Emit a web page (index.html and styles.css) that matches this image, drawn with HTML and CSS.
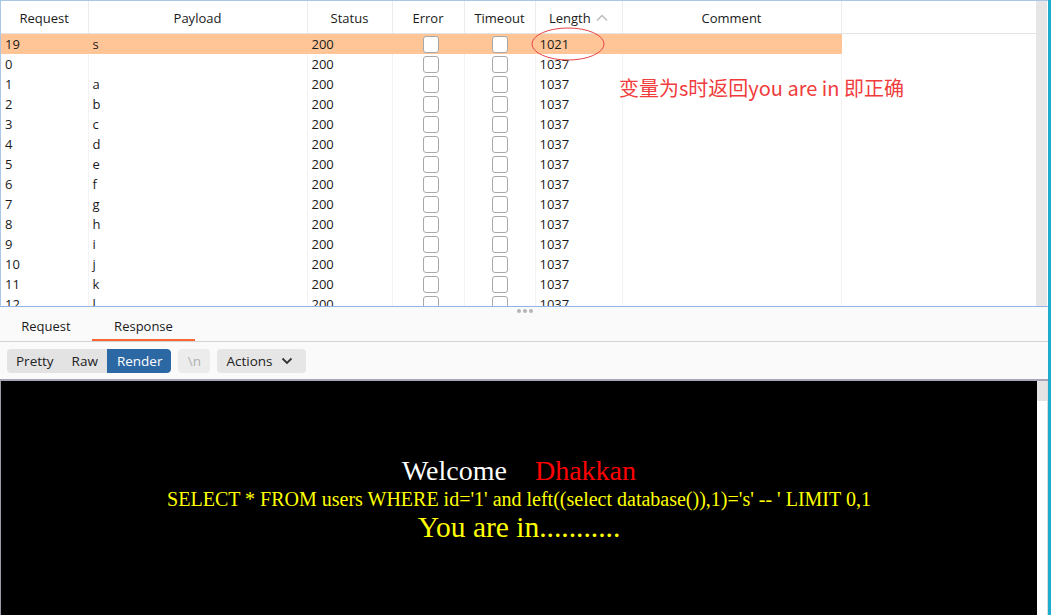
FILE: index.html
```html
<!DOCTYPE html>
<html>
<head>
<meta charset="utf-8">
<link rel="stylesheet" href="styles.css">
</head>
<body>
<div class="app">
  <div class="results">
    <div class="grid-area">
      <table class="grid">
        <colgroup>
          <col class="c-req"><col class="c-pay"><col class="c-st"><col class="c-err"><col class="c-to"><col class="c-len"><col class="c-com"><col class="c-fill">
        </colgroup>
        <thead>
          <tr>
            <th>Request</th><th>Payload</th><th>Status</th><th>Error</th><th>Timeout</th>
            <th class="sorted">Length <svg class="sort" width="12" height="8" viewBox="0 0 12 8"><path d="M1 6.5 L6 1.5 L11 6.5" fill="none" stroke="#b8b8b8" stroke-width="1.3"/></svg></th>
            <th>Comment</th><th class="fill"></th>
          </tr>
        </thead>
        <tbody>
          <tr class="sel"><td>19</td><td>s</td><td>200</td><td class="cb err"><span class="box"></span></td><td class="cb"><span class="box"></span></td><td>1021</td><td></td><td class="fill"></td></tr>
          <tr><td>0</td><td></td><td>200</td><td class="cb err"><span class="box"></span></td><td class="cb"><span class="box"></span></td><td>1037</td><td></td><td class="fill"></td></tr>
          <tr><td>1</td><td>a</td><td>200</td><td class="cb err"><span class="box"></span></td><td class="cb"><span class="box"></span></td><td>1037</td><td></td><td class="fill"></td></tr>
          <tr><td>2</td><td>b</td><td>200</td><td class="cb err"><span class="box"></span></td><td class="cb"><span class="box"></span></td><td>1037</td><td></td><td class="fill"></td></tr>
          <tr><td>3</td><td>c</td><td>200</td><td class="cb err"><span class="box"></span></td><td class="cb"><span class="box"></span></td><td>1037</td><td></td><td class="fill"></td></tr>
          <tr><td>4</td><td>d</td><td>200</td><td class="cb err"><span class="box"></span></td><td class="cb"><span class="box"></span></td><td>1037</td><td></td><td class="fill"></td></tr>
          <tr><td>5</td><td>e</td><td>200</td><td class="cb err"><span class="box"></span></td><td class="cb"><span class="box"></span></td><td>1037</td><td></td><td class="fill"></td></tr>
          <tr><td>6</td><td>f</td><td>200</td><td class="cb err"><span class="box"></span></td><td class="cb"><span class="box"></span></td><td>1037</td><td></td><td class="fill"></td></tr>
          <tr><td>7</td><td>g</td><td>200</td><td class="cb err"><span class="box"></span></td><td class="cb"><span class="box"></span></td><td>1037</td><td></td><td class="fill"></td></tr>
          <tr><td>8</td><td>h</td><td>200</td><td class="cb err"><span class="box"></span></td><td class="cb"><span class="box"></span></td><td>1037</td><td></td><td class="fill"></td></tr>
          <tr><td>9</td><td>i</td><td>200</td><td class="cb err"><span class="box"></span></td><td class="cb"><span class="box"></span></td><td>1037</td><td></td><td class="fill"></td></tr>
          <tr><td>10</td><td>j</td><td>200</td><td class="cb err"><span class="box"></span></td><td class="cb"><span class="box"></span></td><td>1037</td><td></td><td class="fill"></td></tr>
          <tr><td>11</td><td>k</td><td>200</td><td class="cb err"><span class="box"></span></td><td class="cb"><span class="box"></span></td><td>1037</td><td></td><td class="fill"></td></tr>
          <tr><td>12</td><td>l</td><td>200</td><td class="cb err"><span class="box"></span></td><td class="cb"><span class="box"></span></td><td>1037</td><td></td><td class="fill"></td></tr>
        </tbody>
      </table>
      <svg class="ellipse" width="76" height="36" viewBox="0 0 76 36"><ellipse cx="38" cy="18" rx="36" ry="16" fill="none" stroke="#e64545" stroke-width="1"/></svg>
      <div class="note">变量为s时返回you are in 即正确</div>
    </div>
    <div class="vscroll"></div>
  </div>

  <div class="tabbar">
    <div class="grip"><span></span><span></span><span></span></div>
    <div class="tabs">
      <div class="tab">Request</div>
      <div class="tab active">Response</div>
    </div>
  </div>

  <div class="toolbar">
    <div class="seg">
      <span class="btn">Pretty</span><span class="btn">Raw</span><span class="btn on">Render</span>
    </div>
    <span class="btn single disabled">\n</span>
    <span class="btn single actions">Actions <svg width="12" height="8" viewBox="0 0 12 8"><path d="M1.5 1.5 L6 6 L10.5 1.5" fill="none" stroke="#333" stroke-width="1.8"/></svg></span>
  </div>

  <div class="render">
    <div class="page">
      <div class="welcome">Welcome&nbsp;&nbsp;&nbsp;&nbsp;<span class="red">Dhakkan</span></div>
      <div class="sql">SELECT * FROM users WHERE id='1' and left((select database()),1)='s' -- ' LIMIT 0,1</div>
      <div class="in">You are in...........</div>
    </div>
    <div class="rscroll"><div class="thumb"></div></div>
  </div>
</div>
</body>
</html>
```

FILE: styles.css
```css
* { box-sizing: border-box; }
html, body { margin: 0; padding: 0; background: #ffffff; }
body { font-family: "Open Sans", "Noto Sans", sans-serif; font-size: 13px; color: #1a1a1a; }

.app {
  width: 1051px;
  height: 615px;
  overflow: hidden;
  border-right: 3px solid #1eaecd;
  display: flex;
  flex-direction: column;
}

/* results table */
.results {
  height: 307px;
  flex: none;
  display: flex;
  border-top: 1px solid #a9c6e6;
  border-left: 1px solid #a9c6e6;
  border-bottom: 1px solid #8fb5e0;
  overflow: hidden;
}
.grid-area {
  position: relative;
  width: 1035px;
  overflow: hidden;
}
.vscroll {
  width: 11px;
  background: #e6e6e6;
}
.grid {
  border-collapse: collapse;
  table-layout: fixed;
  width: 1035px;
}
.c-req { width: 87px; }
.c-pay { width: 219px; }
.c-st { width: 85px; }
.c-err { width: 72px; }
.c-to { width: 71px; }
.c-len { width: 87px; }
.c-com { width: 219px; }
.c-fill { width: 195px; }

.grid th {
  height: 32px;
  padding: 2px 4px 0;
  font-weight: normal;
  text-align: center;
  color: #1a1a1a;
  border-bottom: 1px solid #e4e4e4;
  border-right: 1px solid #ececec;
  white-space: nowrap;
}
.grid th.fill { border-right: none; }
.sort { margin-left: 2px; vertical-align: 1px; }

.grid td {
  height: 20px;
  padding: 0 4px;
  line-height: 20px;
  white-space: nowrap;
  border-right: 1px solid #f3f3f3;
}
.grid td.fill { border-right: none; }
.grid tr.sel td { background: #ffc597; border-right-color: #ffc597; }
.grid tr.sel td.fill { background: #ffffff; }
.grid td.cb { text-align: center; padding: 0; }
.grid td.cb.err { padding-left: 5px; }
.box {
  display: inline-block;
  width: 16px;
  height: 17px;
  border: 1px solid #a8a8a8;
  border-radius: 3px;
  background: #fff;
  vertical-align: middle;
  margin-top: -2px;
}

.ellipse { position: absolute; left: 529px; top: 25px; }
.note {
  position: absolute;
  left: 618px;
  top: 72px;
  font-family: "Noto Sans CJK SC", "Noto Sans", sans-serif;
  font-size: 20px;
  color: #f03c3c;
  white-space: nowrap;
}

/* tabs */
.tabbar {
  height: 35px;
  flex: none;
  background: #fafafa;
  border-bottom: 1px solid #d2d2d2;
  display: flex;
  flex-direction: column;
}
.grip {
  height: 8px;
  display: flex;
  justify-content: center;
  align-items: center;
  gap: 2px;
  padding-left: 2px;
}
.grip span { width: 4px; height: 4px; border-radius: 50%; background: #b4b4b4; }
.tabs { flex: 1; display: flex; }
.tab {
  line-height: 25px;
  color: #1a1a1a;
  width: 92px;
  text-align: center;
}
.tab.active {
  width: 103px;
  border-bottom: 2px solid #ff6633;
}

/* toolbar */
.toolbar {
  height: 37px;
  flex: none;
  background: #fafafa;
  display: flex;
  align-items: center;
  gap: 7px;
  padding-left: 7px;
}
.seg {
  display: flex;
  background: #e3e3e3;
  border-radius: 4px;
  height: 24px;
  overflow: hidden;
}
.btn {
  height: 24px;
  line-height: 24px;
  padding: 0 9px;
  font-size: 13.5px;
  color: #222;
}
.btn.on { background: #2c68a3; color: #fff; padding: 0 9px 0 10px; border-radius: 0 4px 4px 0; }
.btn.single { background: #e6e6e6; border-radius: 4px; }
.btn.disabled { color: #b0b0b0; width: 32px; text-align: center; padding: 0; background: #ececec; }
.btn.actions { display: flex; align-items: center; gap: 8px; width: 89px; padding-left: 9px; }

/* render */
.render {
  flex: 1;
  display: flex;
  border-top: 2px solid #a6a6b4;
  border-left: 1px solid #9a9aa6;
}
.page {
  flex: 1;
  background: #000;
  font-family: "Liberation Serif", "Times New Roman", serif;
  text-align: center;
  padding-top: 73px;
}
.welcome { font-size: 28px; line-height: 33px; color: #ffffff; }
.red { color: #ff0000; }
.sql { font-size: 20px; line-height: 24px; color: #ffff00; }
.in { font-size: 29.5px; line-height: 32px; color: #ffff00; }
.rscroll {
  width: 11px;
  background: #ffffff;
  border-right: 1px solid #dcdcdc;
}
.thumb { height: 20px; background: #e4e4e4; }
```
